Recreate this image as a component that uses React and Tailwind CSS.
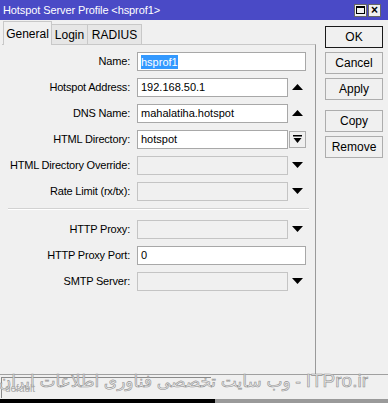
import React from 'react';

const font = { fontFamily: '"Liberation Sans", Arial, sans-serif' };

const UpArrow = () => (
  <svg width="11" height="7" viewBox="0 0 11 7">
    <polygon points="0,6 5.5,0 11,6" fill="#000" />
  </svg>
);

const DownArrow = () => (
  <svg width="11" height="7" viewBox="0 0 11 7">
    <polygon points="0,0 5.5,6 11,0" fill="#000" />
  </svg>
);

const DropButton = () => (
  <div className="w-[17px] h-[17px] border border-[#adadad] bg-[#f0f0f0] flex items-center justify-center">
    <svg width="9" height="9" viewBox="0 0 9 9">
      <rect x="0" y="0" width="9" height="1.5" fill="#000" />
      <polygon points="0.5,3 8.5,3 4.5,8" fill="#000" />
    </svg>
  </div>
);

const rows = [
  { label: 'Name:', value: 'hsprof1', selected: true, full: true },
  { label: 'Hotspot Address:', value: '192.168.50.1', suffix: 'up' },
  { label: 'DNS Name:', value: 'mahalatiha.hotspot', suffix: 'up' },
  { label: 'HTML Directory:', value: 'hotspot', suffix: 'drop' },
  { label: 'HTML Directory Override:', disabled: true, suffix: 'down' },
  { label: 'Rate Limit (rx/tx):', disabled: true, suffix: 'down' },
];

const rows2 = [
  { label: 'HTTP Proxy:', disabled: true, suffix: 'down' },
  { label: 'HTTP Proxy Port:', value: '0', full: true },
  { label: 'SMTP Server:', disabled: true, suffix: 'down' },
];

const Row = ({ row }) => (
  <div className="flex items-center h-[19px] mb-[7px]">
    <div className="w-[128px] text-right text-[11px] text-black whitespace-nowrap tracking-[-0.2px]">{row.label}</div>
    <div className="ml-[7px] flex items-center">
      <div
        className={`h-[19px] border flex items-center px-[3px] text-[11px] ${
          row.full ? 'w-[169px]' : 'w-[151px]'
        } ${row.disabled ? 'bg-[#f0f0f0] border-[#c4c4c4]' : 'bg-white border-[#a8a8a8]'}`}
      >
        {row.selected ? (
          <span className="bg-[#3399ff] text-white leading-[14px]">{row.value}</span>
        ) : (
          <span className="text-black">{row.value}</span>
        )}
      </div>
      {!row.full && (
        <div className="w-[18px] flex items-center justify-center">
          {row.suffix === 'up' && <UpArrow />}
          {row.suffix === 'down' && <DownArrow />}
          {row.suffix === 'drop' && <DropButton />}
        </div>
      )}
    </div>
  </div>
);

const SideButton = ({ label, isDefault }) => (
  <div
    className={`w-[58px] h-[22px] flex items-center justify-center text-[12px] text-black bg-[#f0f0f0] border ${
      isDefault ? 'border-[#1a1a1a]' : 'border-[#adadad]'
    }`}
  >
    {label}
  </div>
);

const App = () => {
  return (
    <div className="w-[388px] h-[403px] bg-[#f0f0f0] relative overflow-hidden flex flex-col" style={font}>
      {/* Title bar */}
      <div className="h-[20px] bg-[#4a4ac6] flex items-center justify-between pl-[3px] pr-[7px]">
        <span className="text-white text-[11px] tracking-[-0.1px]">Hotspot Server Profile &lt;hsprof1&gt;</span>
        <div className="flex gap-[1px]">
          <div className="w-[13px] h-[13px] bg-[#f0f0f0] border border-[#666] flex items-center justify-center">
            <div className="w-[9px] h-[8px] border border-black border-t-2"></div>
          </div>
          <div className="w-[13px] h-[13px] bg-[#f0f0f0] border border-[#666] flex items-center justify-center text-[12px] font-bold leading-none">
            ×
          </div>
        </div>
      </div>

      {/* Main */}
      <div className="flex h-[354px]">
        <div className="w-[318px] flex flex-col">
          {/* Tabs */}
          <div className="flex items-end h-[24px] pl-[3px] relative z-10">
            <div className="w-[49px] h-[24px] -mb-px bg-[#f0f0f0] border-t border-l border-r border-[#c8c8c8] flex items-center justify-center text-[12px]">
              General
            </div>
            <div className="w-[36px] h-[20px] bg-[#e6e6e6] border-t border-r border-[#c8c8c8] flex items-center justify-center text-[12px]">
              Login
            </div>
            <div className="w-[54px] h-[20px] bg-[#e6e6e6] border-t border-r border-[#c8c8c8] flex items-center justify-center text-[12px]">
              RADIUS
            </div>
          </div>
          {/* Panel */}
          <div className="flex-1 ml-[2px] mr-[2px] border-t border-r border-[#c8c8c8] border-r-[#9a9a9a] pt-[7px]">
            {rows.map((r) => (
              <Row key={r.label} row={r} />
            ))}
            <div className="mx-[6px] mt-[1px] mb-[10px] border-t border-[#d2d2d2] border-b border-b-white"></div>
            {rows2.map((r) => (
              <Row key={r.label} row={r} />
            ))}
          </div>
        </div>

        {/* Buttons */}
        <div className="pl-[7px] pt-[6px] flex flex-col">
          <SideButton label="OK" isDefault />
          <div className="h-[4px]" />
          <SideButton label="Cancel" />
          <div className="h-[4px]" />
          <SideButton label="Apply" />
          <div className="h-[10px]" />
          <SideButton label="Copy" />
          <div className="h-[4px]" />
          <SideButton label="Remove" />
        </div>
      </div>

      {/* Status bar */}
      <div className="h-[25px] border-t border-[#a0a0a0] pt-[2px] pl-[1px]">
        <div className="w-[210px] h-[21px] border-l border-t border-[#8a8a8a] flex items-end pl-[3px] pb-[2px] text-[10px] text-[#a8a8a8]">
          default
        </div>
      </div>
      <div className="flex h-[4px]">
        <div className="w-[215px] bg-black" />
        <div className="flex-1 bg-[#9a9a9a]" />
      </div>

      {/* Watermark */}
      <div
        dir="rtl"
        className="absolute left-[18px] right-[20px] top-[369px] text-[#ececec] whitespace-nowrap text-right [-webkit-text-stroke:0.6px_#909090] pointer-events-none leading-[24px]"
        style={{ fontFamily: '"Liberation Sans", "DejaVu Sans", sans-serif' }}
      >
        <span className="text-[19px]">ITPro.ir</span>
        <span className="text-[17px]"> - وب سایت تخصصی فناوری اطلاعات ایران</span>
      </div>
    </div>
  );
};

export default App;
